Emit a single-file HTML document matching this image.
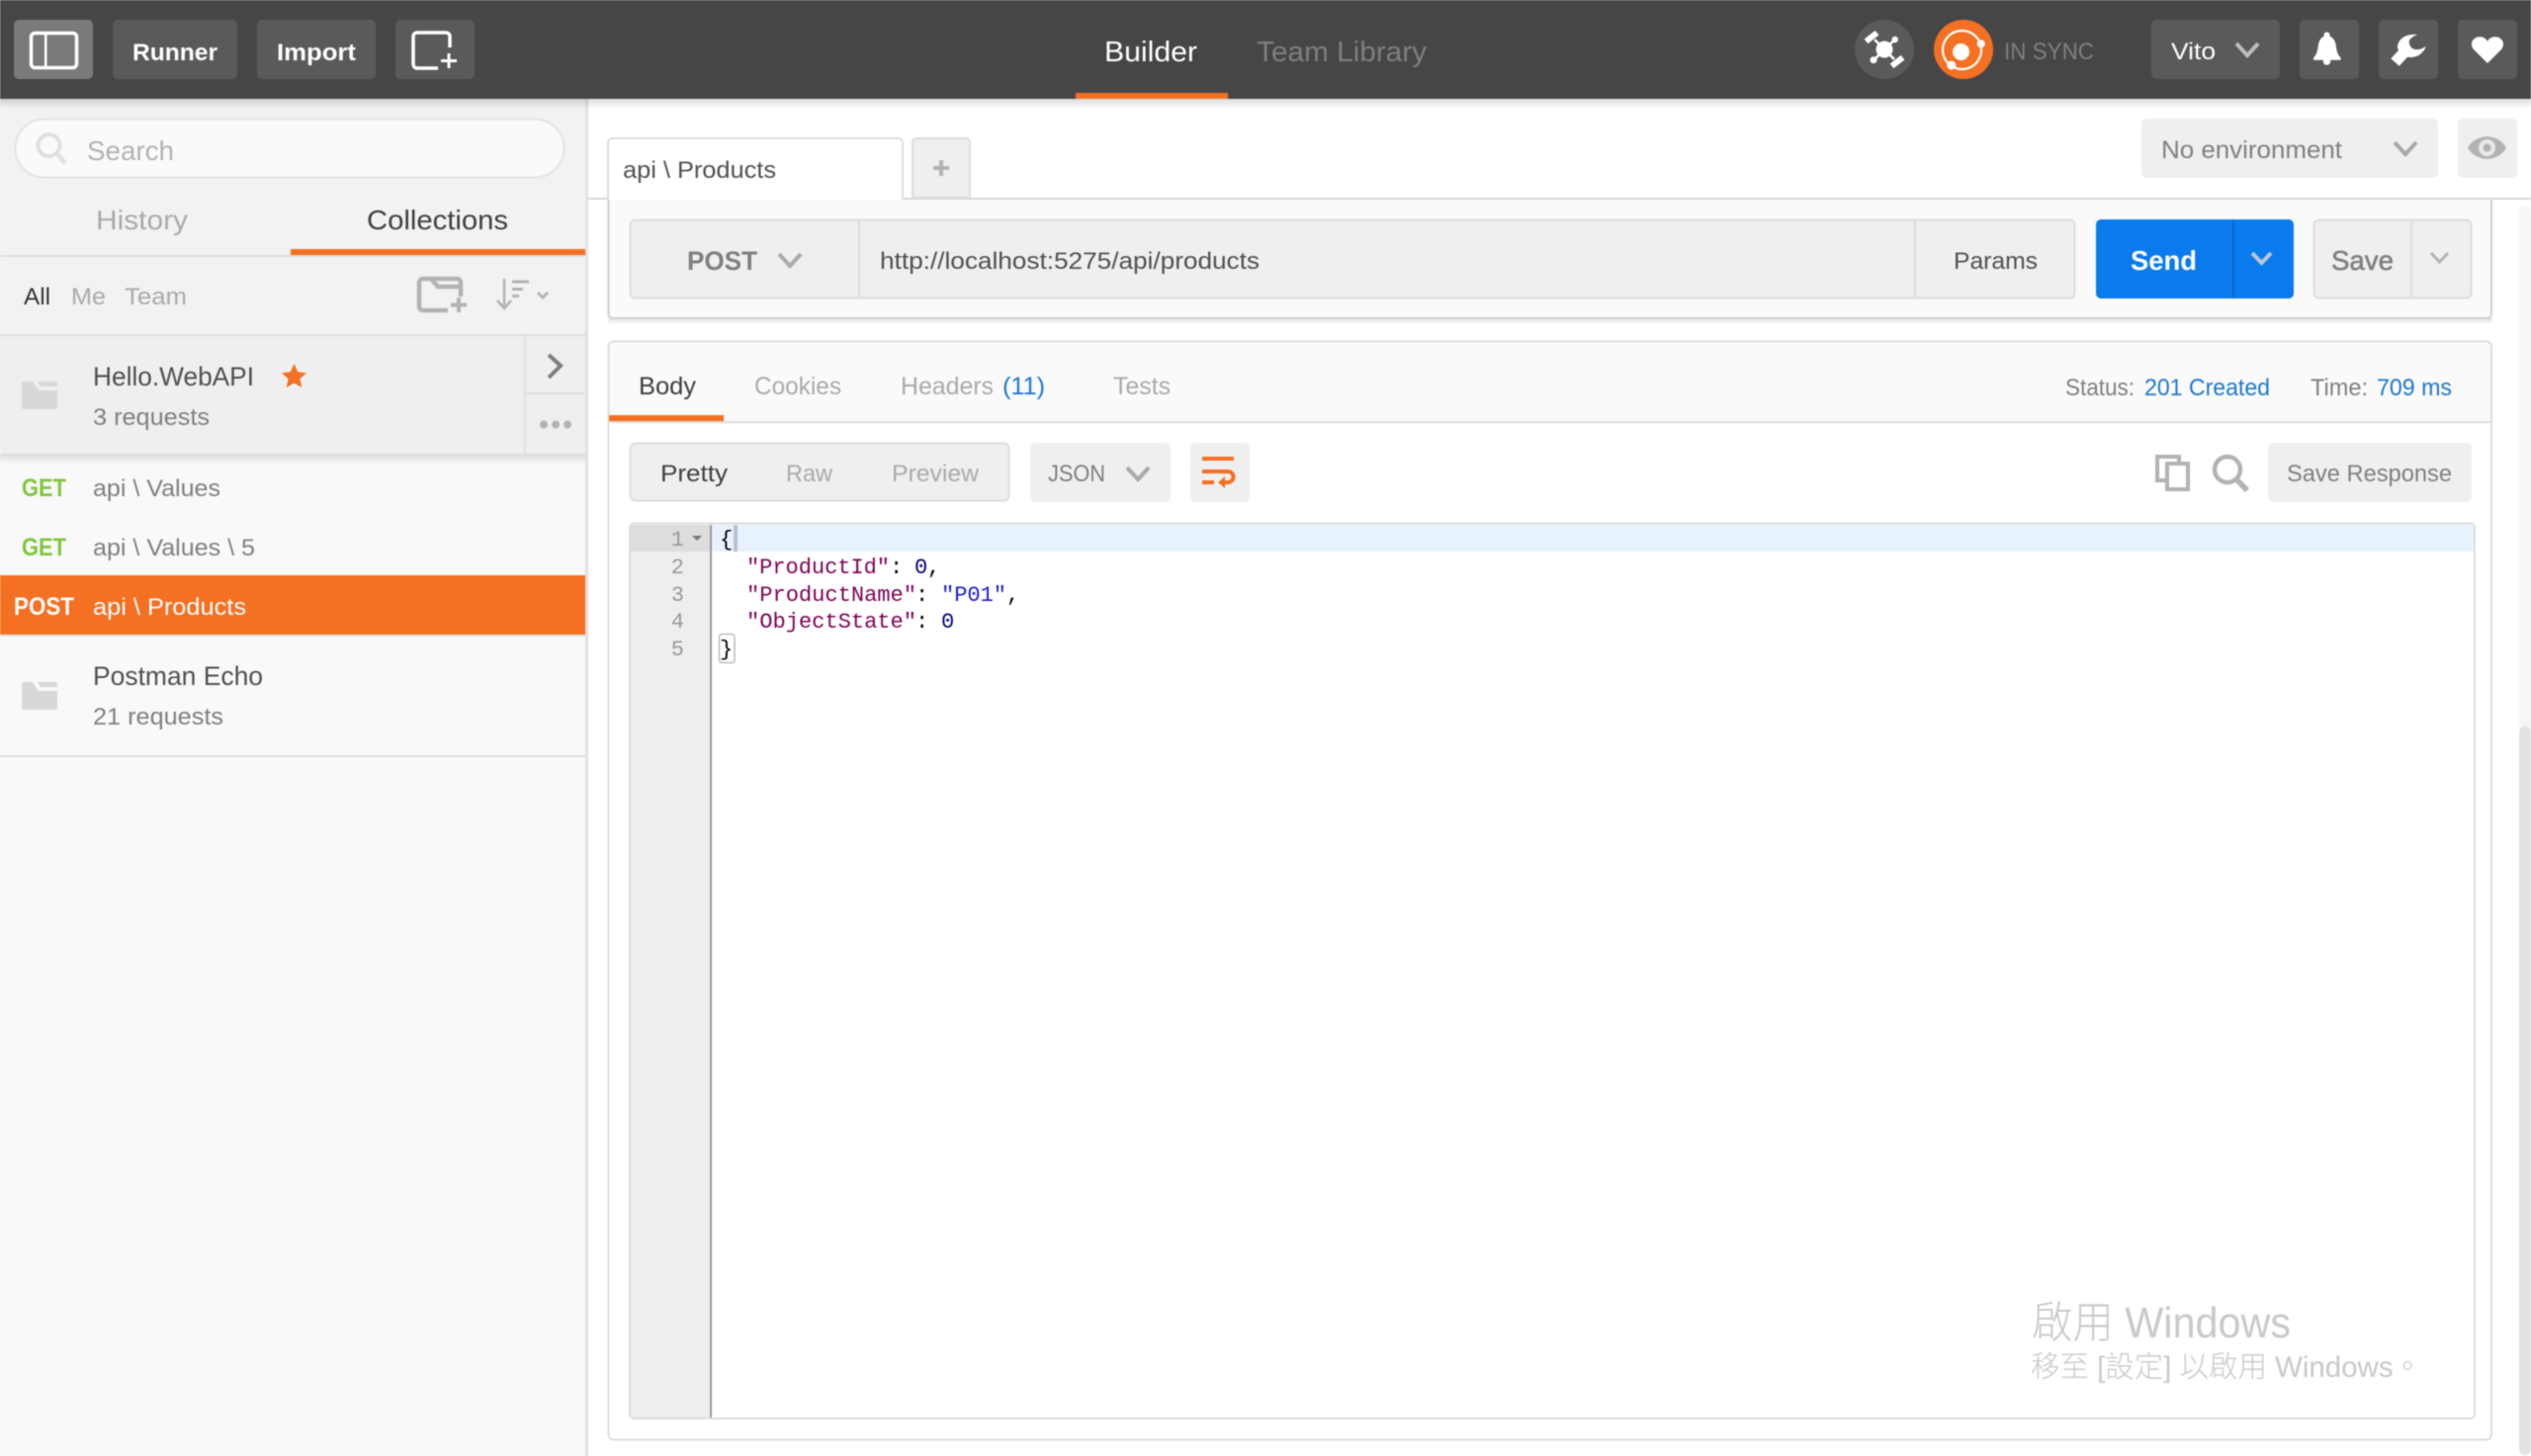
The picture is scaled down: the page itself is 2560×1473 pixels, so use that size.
<!DOCTYPE html>
<html><head><meta charset="utf-8"><title>Postman</title>
<style>
html,body{margin:0;padding:0;background:#fff;width:2560px;height:1473px;overflow:hidden}
svg{display:block;filter:blur(.4px)}
text{font-family:"Liberation Sans","Noto Sans CJK TC",sans-serif}
.b{font-weight:700}
.m{font-family:"Liberation Mono",monospace;font-size:22px;white-space:pre}
</style></head><body>
<svg xmlns="http://www.w3.org/2000/svg" width="2560" height="1473" viewBox="0 0 2560 1473">
<defs>
<linearGradient id="sh" x1="0" y1="0" x2="0" y2="1"><stop offset="0" stop-color="#000" stop-opacity=".2"/><stop offset="1" stop-color="#000" stop-opacity="0"/></linearGradient>
</defs>
<rect width="2560" height="1473" fill="#fff"/>

<!-- sidebar -->
<rect x="0" y="100" width="592" height="1373" fill="#f9f9f9"/>
<rect x="0" y="100" width="592" height="239" fill="#f2f2f2"/>
<rect x="592" y="100" width="3" height="1373" fill="#e2e2e2"/>
<rect x="15.500" y="120.500" width="555" height="59" rx="29.500" fill="#fafafa" stroke="#e3e3e3" stroke-width="2"/>
<circle cx="49.500" cy="147" r="11" fill="none" stroke="#e0e0e0" stroke-width="4"/>
<line x1="57" y1="155" x2="66" y2="165" stroke="#e0e0e0" stroke-width="4.500"/>
<text x="88" y="162" font-size="28" fill="#b3b3b3" textLength="88" lengthAdjust="spacingAndGlyphs">Search</text>
<text x="97" y="232" font-size="28" fill="#aaaaaa" textLength="93" lengthAdjust="spacingAndGlyphs">History</text>
<text x="371" y="232" font-size="28" fill="#404040" textLength="143" lengthAdjust="spacingAndGlyphs">Collections</text>
<rect x="0" y="258" width="592" height="2" fill="#ddd"/>
<rect x="294" y="252" width="298" height="6" fill="#f47023"/>
<text x="24" y="308" font-size="24" fill="#333" textLength="27" lengthAdjust="spacingAndGlyphs">All</text>
<text x="72" y="308" font-size="24" fill="#aaa" textLength="35" lengthAdjust="spacingAndGlyphs">Me</text>
<text x="126" y="308" font-size="24" fill="#aaa" textLength="63" lengthAdjust="spacingAndGlyphs">Team</text>
<path d="M466 300V286a4 4 0 0 0-4-4H428a4 4 0 0 0-4 4v25a4 4 0 0 0 4 3h25M436 282l7 8h23" fill="none" stroke="#b3b3b3" stroke-width="4.500"/>
<path d="M464 301v15M456 308.500h16" fill="none" stroke="#b3b3b3" stroke-width="4"/>
<path d="M510 282v30M503 304l7 8 7-8" fill="none" stroke="#b3b3b3" stroke-width="2.500"/>
<path d="M518 285h17M518 292.500h11M518 299.500h7" fill="none" stroke="#b3b3b3" stroke-width="3"/>
<path d="M544 296l5 5 5-5" fill="none" stroke="#b3b3b3" stroke-width="3"/>

<!-- collection row -->
<rect x="0" y="338" width="592" height="2" fill="#ddd"/>
<rect x="0" y="340" width="592" height="120" fill="#efefef"/>
<rect x="0" y="460" width="592" height="10" fill="url(#sh)" opacity=".5"/>
<rect x="0" y="459" width="592" height="2" fill="#dcdcdc"/>
<rect x="530" y="340" width="2" height="120" fill="#e0e0e0"/>
<rect x="530" y="397" width="62" height="2" fill="#e0e0e0"/>
<path d="M22 388a2 2 0 0 1 2-2h9l6 9h19v17a2 2 0 0 1-2 2H24a2 2 0 0 1-2-2z" fill="#d8d8d8"/>
<path d="M38 386H56a2 2 0 0 1 2 2v3H41z" fill="#d8d8d8"/>
<text x="94" y="390" font-size="27" fill="#505050" textLength="163" lengthAdjust="spacingAndGlyphs">Hello.WebAPI</text>
<path d="M297.500 368l3.700 8.300 8.800.900-6.600 6 1.900 8.800-7.800-4.500-7.800 4.500 1.900-8.800-6.600-6 8.800-.900z" fill="#f47023"/>
<text x="94" y="430" font-size="24" fill="#808080" textLength="118" lengthAdjust="spacingAndGlyphs">3 requests</text>
<path d="M555 359l12 11-12 12" fill="none" stroke="#808080" stroke-width="4"/>
<circle cx="550" cy="429.500" r="4" fill="#b3b3b3"/><circle cx="562" cy="429.500" r="4" fill="#b3b3b3"/><circle cx="574" cy="429.500" r="4" fill="#b3b3b3"/>

<!-- requests -->
<text x="22" y="502" font-size="25" class="b" fill="#80c63f" textLength="45" lengthAdjust="spacingAndGlyphs">GET</text>
<text x="94" y="502" font-size="24" fill="#808080" textLength="129" lengthAdjust="spacingAndGlyphs">api \ Values</text>
<text x="22" y="562" font-size="25" class="b" fill="#80c63f" textLength="45" lengthAdjust="spacingAndGlyphs">GET</text>
<text x="94" y="562" font-size="24" fill="#808080" textLength="164" lengthAdjust="spacingAndGlyphs">api \ Values \ 5</text>
<rect x="0" y="582" width="592" height="60" fill="#f47023"/>
<rect x="0" y="642" width="592" height="2" fill="#e2e2e2"/>
<text x="14" y="622" font-size="25" class="b" fill="#fff" textLength="61" lengthAdjust="spacingAndGlyphs">POST</text>
<text x="94" y="622" font-size="24" fill="#fff" textLength="155" lengthAdjust="spacingAndGlyphs">api \ Products</text>
<path d="M22 692a2 2 0 0 1 2-2h9l6 9h19v17a2 2 0 0 1-2 2H24a2 2 0 0 1-2-2z" fill="#d8d8d8"/>
<path d="M38 690H56a2 2 0 0 1 2 2v3H41z" fill="#d8d8d8"/>
<text x="94" y="693" font-size="27" fill="#505050" textLength="172" lengthAdjust="spacingAndGlyphs">Postman Echo</text>
<text x="94" y="733" font-size="24" fill="#808080" textLength="132" lengthAdjust="spacingAndGlyphs">21 requests</text>
<rect x="0" y="764" width="592" height="2" fill="#ddd"/>

<!-- main tabs -->
<rect x="595" y="200" width="1965" height="2" fill="#d8d8d8"/>
<path d="M615 202V144a4 4 0 0 1 4-4H909a4 4 0 0 1 4 4V202" fill="#fff" stroke="#ddd" stroke-width="2"/>
<text x="630" y="180" font-size="24" fill="#505050" textLength="155" lengthAdjust="spacingAndGlyphs">api \ Products</text>
<path d="M923 200V144a4 4 0 0 1 4-4h50a4 4 0 0 1 4 4V200z" fill="#efefef" stroke="#ddd" stroke-width="2"/>
<path d="M952 162v16M944 170h16" stroke="#b3b3b3" stroke-width="4"/>
<rect x="2166" y="120" width="300" height="60" rx="5" fill="#efefef"/>
<text x="2186" y="160" font-size="25" fill="#808080" textLength="183" lengthAdjust="spacingAndGlyphs">No environment</text>
<path d="M2422 144l11 12 11-12" fill="none" stroke="#aaa" stroke-width="4"/>
<rect x="2486" y="120" width="60" height="60" rx="5" fill="#efefef"/>
<path d="M2496 149.500C2504 134.500 2527 134.500 2535 149.500 2527 164.500 2504 164.500 2496 149.500z" fill="#b3b3b3"/>
<circle cx="2515.500" cy="149.500" r="8.500" fill="#e8e8e8"/>
<circle cx="2515.500" cy="149.500" r="4" fill="#b3b3b3"/>

<!-- request panel -->
<rect x="615" y="322" width="1906" height="6" fill="url(#sh)" opacity=".6"/>
<path d="M615.500 202V318a4 4 0 0 0 4 4H2516a4 4 0 0 0 4-4V202" fill="#fafafa" stroke="#cfcfcf" stroke-width="2"/>
<rect x="637.500" y="222.500" width="1461" height="79" rx="5" fill="#efefef" stroke="#ddd" stroke-width="2"/>
<rect x="868" y="223" width="2" height="78" fill="#ddd"/>
<rect x="1936" y="223" width="2" height="78" fill="#ddd"/>
<text x="695" y="273" font-size="27" class="b" fill="#808080" textLength="71" lengthAdjust="spacingAndGlyphs">POST</text>
<path d="M788 257l11 12 11-12" fill="none" stroke="#aaa" stroke-width="4"/>
<text x="890" y="272" font-size="24" fill="#505050" textLength="384" lengthAdjust="spacingAndGlyphs">http://localhost:5275/api/products</text>
<text x="1976" y="272" font-size="24" fill="#505050" textLength="85" lengthAdjust="spacingAndGlyphs">Params</text>
<rect x="2120" y="222" width="200" height="80" rx="5" fill="#097bed"/>
<rect x="2258" y="222" width="2" height="80" fill="#0a68c4"/>
<text x="2155" y="273" font-size="28" class="b" fill="#fff" textLength="67" lengthAdjust="spacingAndGlyphs">Send</text>
<path d="M2278 256l9.500 10 9.500-10" fill="none" stroke="#b9c7d8" stroke-width="4"/>
<rect x="2340.500" y="222.500" width="159" height="79" rx="5" fill="#efefef" stroke="#ddd" stroke-width="2"/>
<rect x="2438" y="223" width="2" height="78" fill="#ddd"/>
<text x="2358" y="273" font-size="28" fill="#808080" textLength="63" lengthAdjust="spacingAndGlyphs" style="stroke:#808080;stroke-width:.6px">Save</text>
<path d="M2459 256l8.500 9 8.500-9" fill="none" stroke="#b3b3b3" stroke-width="3"/>

<!-- response panel -->
<rect x="615.500" y="345.500" width="1904.500" height="1111" rx="5" fill="#fff" stroke="#ddd" stroke-width="2"/>
<path d="M616.500 426V351a4 4 0 0 1 4-4H2515a4 4 0 0 1 4 4V426z" fill="#fafafa"/>
<rect x="617" y="426" width="1902" height="2" fill="#ddd"/>
<rect x="616" y="420" width="116" height="6" fill="#f47023"/>
<text x="646" y="399" font-size="25" fill="#404040" textLength="58" lengthAdjust="spacingAndGlyphs">Body</text>
<text x="763" y="399" font-size="25" fill="#aaa" textLength="88" lengthAdjust="spacingAndGlyphs">Cookies</text>
<text x="911" y="399" font-size="25" fill="#aaa" textLength="94" lengthAdjust="spacingAndGlyphs">Headers</text>
<text x="1014" y="399" font-size="25" fill="#1f78d1" textLength="43" lengthAdjust="spacingAndGlyphs">(11)</text>
<text x="1126" y="399" font-size="25" fill="#aaa" textLength="58" lengthAdjust="spacingAndGlyphs">Tests</text>
<text x="2089" y="400" font-size="24" fill="#808080" textLength="70" lengthAdjust="spacingAndGlyphs">Status:</text>
<text x="2169" y="400" font-size="24" fill="#1f78d1" textLength="127" lengthAdjust="spacingAndGlyphs">201 Created</text>
<text x="2337" y="400" font-size="24" fill="#808080" textLength="58" lengthAdjust="spacingAndGlyphs">Time:</text>
<text x="2404" y="400" font-size="24" fill="#1f78d1" textLength="76" lengthAdjust="spacingAndGlyphs">709 ms</text>

<rect x="637.500" y="448.500" width="383" height="58" rx="5" fill="#efefef" stroke="#ddd" stroke-width="2"/>
<text x="668" y="487" font-size="24" fill="#404040" textLength="68" lengthAdjust="spacingAndGlyphs">Pretty</text>
<text x="795" y="487" font-size="24" fill="#aaa" textLength="47" lengthAdjust="spacingAndGlyphs">Raw</text>
<text x="902" y="487" font-size="24" fill="#aaa" textLength="88" lengthAdjust="spacingAndGlyphs">Preview</text>
<rect x="1042" y="448" width="142" height="60" rx="5" fill="#efefef"/>
<text x="1060" y="487" font-size="24" fill="#808080" textLength="58" lengthAdjust="spacingAndGlyphs">JSON</text>
<path d="M1140 473l11 12 11-12" fill="none" stroke="#aaa" stroke-width="4"/>
<rect x="1204" y="448" width="60" height="60" rx="5" fill="#efefef"/>
<path d="M1216 464h32M1216 477h26a5.500 5.500 0 0 1 0 11h-4M1216 488h12" fill="none" stroke="#f47023" stroke-width="4"/>
<path d="M1239 482v12l-7-6z" fill="#f47023"/>

<path d="M2190 486h-8V462h22v6" fill="none" stroke="#b3b3b3" stroke-width="4"/>
<rect x="2192" y="469" width="21" height="26" fill="none" stroke="#b3b3b3" stroke-width="4"/>
<circle cx="2253" cy="475" r="13" fill="none" stroke="#b3b3b3" stroke-width="4.500"/>
<line x1="2262" y1="485" x2="2273" y2="496" stroke="#b3b3b3" stroke-width="5.500"/>
<rect x="2294" y="448" width="206" height="60" rx="5" fill="#efefef"/>
<text x="2313" y="487" font-size="24" fill="#808080" textLength="167" lengthAdjust="spacingAndGlyphs">Save Response</text>

<!-- editor -->
<rect x="637" y="529.500" width="1866" height="905.500" rx="4" fill="#fff" stroke="#ddd" stroke-width="2"/>
<rect x="638" y="531" width="80" height="903" fill="#eeeeee"/>
<rect x="638" y="531" width="80" height="27" fill="#dddddd"/>
<rect x="719" y="531" width="1783" height="27" fill="#e8f2ff"/>
<rect x="718" y="531" width="2" height="903" fill="#999"/>
<g font-size="22" fill="#999" text-anchor="end">
<text x="692" y="552" style="font-family:'Liberation Mono',monospace">1</text>
<text x="692" y="580" style="font-family:'Liberation Mono',monospace">2</text>
<text x="692" y="608" style="font-family:'Liberation Mono',monospace">3</text>
<text x="692" y="635" style="font-family:'Liberation Mono',monospace">4</text>
<text x="692" y="663" style="font-family:'Liberation Mono',monospace">5</text>
</g>
<path d="M700 542h10l-5 5z" fill="#777"/>
<rect x="742" y="531" width="4" height="27" fill="#b9c2cc"/>
<rect x="727.500" y="641.500" width="15.500" height="29" rx="3" fill="#fff" stroke="#bbb" stroke-width="1.500"/>
<text class="m" x="728" y="552" fill="#000">{</text>
<text class="m" x="755" y="580" textLength="145" lengthAdjust="spacingAndGlyphs" fill="#7f0055">"ProductId"</text>
<text class="m" x="900" y="580" fill="#000">:</text>
<text class="m" x="925" y="580" fill="#000080">0</text>
<text class="m" x="938" y="580" fill="#000">,</text>
<text class="m" x="755" y="608" textLength="172" lengthAdjust="spacingAndGlyphs" fill="#7f0055">"ProductName"</text>
<text class="m" x="926" y="608" fill="#000">:</text>
<text class="m" x="952" y="608" textLength="66" lengthAdjust="spacingAndGlyphs" fill="#1a1acc">"P01"</text>
<text class="m" x="1018" y="608" fill="#000">,</text>
<text class="m" x="755" y="635" textLength="172" lengthAdjust="spacingAndGlyphs" fill="#7f0055">"ObjectState"</text>
<text class="m" x="926" y="635" fill="#000">:</text>
<text class="m" x="952" y="635" fill="#000080">0</text>
<text class="m" x="728" y="663" fill="#000">}</text>

<!-- watermark -->
<text x="2055" y="1353" font-size="44" fill="#c9c9c9" textLength="262" lengthAdjust="spacingAndGlyphs" style="font-weight:300">啟用 Windows</text>
<text x="2054" y="1393" font-size="30" fill="#c9c9c9" textLength="396" lengthAdjust="spacingAndGlyphs" style="font-weight:300">移至 [設定] 以啟用 Windows。</text>

<!-- scrollbar -->
<rect x="2548" y="208" width="12" height="1264" rx="6" fill="#f7f6f6"/>
<rect x="2548" y="735" width="12" height="737" rx="6" fill="#e2e2e2"/>

<!-- top bar -->
<rect x="0" y="100" width="2560" height="10" fill="url(#sh)" opacity=".7"/>
<rect width="2560" height="100" fill="#464646"/>
<rect x="14" y="20" width="80" height="60" rx="5" fill="#7a7a7a"/>
<rect x="31.500" y="33.500" width="46" height="35" rx="4" fill="none" stroke="#fff" stroke-width="3.500"/>
<rect x="45" y="34" width="2.500" height="34" fill="#fff"/>
<rect x="114" y="20" width="126" height="60" rx="5" fill="#5a5a5a"/>
<text x="134" y="61" font-size="24" class="b" fill="#fff" textLength="86" lengthAdjust="spacingAndGlyphs">Runner</text>
<rect x="260" y="20" width="120" height="60" rx="5" fill="#5a5a5a"/>
<text x="280" y="61" font-size="24" class="b" fill="#fff" textLength="80" lengthAdjust="spacingAndGlyphs">Import</text>
<rect x="400" y="20" width="80" height="60" rx="5" fill="#5a5a5a"/>
<path d="M455 48V37a4 4 0 0 0-4-4H422a4 4 0 0 0-4 4V65a4 4 0 0 0 4 4h21" fill="none" stroke="#fff" stroke-width="3.500"/>
<path d="M454 54v15M446 61.500h16" stroke="#fff" stroke-width="3"/>
<text x="1117" y="62" font-size="29" fill="#fff" textLength="94" lengthAdjust="spacingAndGlyphs">Builder</text>
<text x="1271" y="62" font-size="29" fill="#7f7f7f" textLength="172" lengthAdjust="spacingAndGlyphs">Team Library</text>
<rect x="1088" y="94" width="154" height="6" fill="#f47023"/>

<circle cx="1906" cy="50" r="30" fill="#5a5a5a"/>
<circle cx="1906" cy="50" r="8.500" fill="#fff"/>
<path d="M1896 40l20 20M1916.500 40l-21 20.500" stroke="#fff" stroke-width="2.500"/>
<rect x="1886" y="34.500" width="14" height="6" fill="#fff" transform="rotate(-38 1893 37.500)"/>
<rect x="1912" y="59.500" width="14" height="6" fill="#fff" transform="rotate(-38 1919 62.500)"/>
<circle cx="1916.700" cy="40" r="3.200" fill="#fff"/>
<circle cx="1895" cy="60.700" r="3.500" fill="#fff"/>

<circle cx="1986" cy="50" r="30" fill="#f47023"/>
<circle cx="1984.500" cy="50.500" r="19.500" fill="none" stroke="#fff" stroke-width="2.200"/>
<circle cx="1983.500" cy="52.500" r="8.500" fill="#fff"/>
<circle cx="2003.800" cy="44.300" r="4" fill="#fff"/>
<circle cx="1973.800" cy="66" r="4.500" fill="#fff"/>
<text x="2027" y="60" font-size="24" fill="#7f7f7f" textLength="91" lengthAdjust="spacingAndGlyphs">IN SYNC</text>

<rect x="2176" y="20" width="130" height="60" rx="5" fill="#5a5a5a"/>
<text x="2196" y="60" font-size="24" fill="#fff" textLength="45" lengthAdjust="spacingAndGlyphs">Vito</text>
<path d="M2262 44l11 12 11-12" fill="none" stroke="#bdbdbd" stroke-width="4"/>
<rect x="2326" y="20" width="60" height="60" rx="5" fill="#5a5a5a"/>
<path d="M2353.500 32.500c1.800 0 3 1.200 3 3v1.200C2360 38 2362 41 2362.700 46c.8 5.500 1.500 9 4.800 12.500v2.200H2340v-2.200c3.300-3.500 4-7 4.800-12.500.7-5 2.700-8 5.700-9.300v-1.200c0-1.800 1.200-3 3-3z" fill="#fff"/>
<circle cx="2353.500" cy="62" r="3.800" fill="#fff"/>
<rect x="2406" y="20" width="60" height="60" rx="5" fill="#5a5a5a"/>
<path d="M2445 35C2436 34 2428 37 2425.500 44.500 2424.500 47 2425 49 2426 51L2418.300 59.300 2426.700 66.700 2435 57.800C2440 58.500 2446 57.500 2450 53 2452.500 50.500 2453.300 48.500 2453.300 46.700 2450.500 49.500 2445 51 2441 49.500 2437 47.500 2435.500 42 2437.800 39.500 2439.500 37.500 2442.500 36 2445 35z" fill="#fff"/>
<rect x="2486" y="20" width="60" height="60" rx="5" fill="#5a5a5a"/>
<path d="M2516 64L2502 50C2497 44 2502 37 2508.500 37.300 2512 37.300 2515 39.500 2516 42 2517 39.500 2520 37.300 2523.500 37.300 2530 37 2535 44 2530 50z" fill="#fff"/>
</svg>
</body></html>
